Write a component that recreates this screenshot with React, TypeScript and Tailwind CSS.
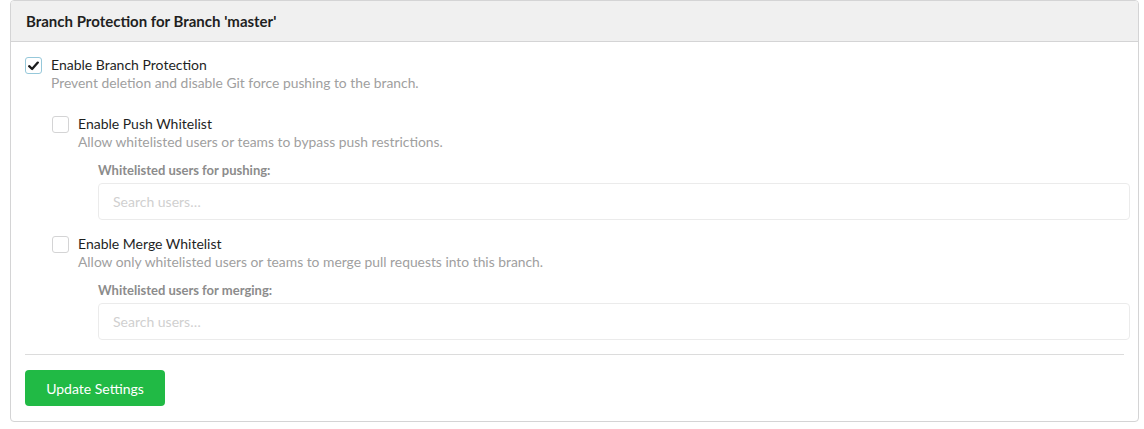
import React from "react";

function Box({ checked, focused }: { checked?: boolean; focused?: boolean }) {
  return (
    <div
      className={
        "w-[17px] h-[17px] shrink-0 rounded-[3px] border bg-white flex items-center justify-center " +
        (focused ? "border-[#96c8da]" : "border-[#d4d4d5]")
      }
    >
      {checked && (
        <svg width="11" height="10" viewBox="0 0 11 10">
          <path d="M1.2 5.2 L4.1 8 L9.8 1.6" fill="none" stroke="#1b1c1d" strokeWidth="2.3" strokeLinecap="round" strokeLinejoin="round" />
        </svg>
      )}
    </div>
  );
}

function Row({
  title,
  desc,
  checked,
  focused,
}: {
  title: string;
  desc: string;
  checked?: boolean;
  focused?: boolean;
}) {
  return (
    <div className="flex">
      <div className="pt-[1px]">
        <Box checked={checked} focused={focused} />
      </div>
      <div className="ml-[9px]">
        <div className="text-[14px] leading-[18px] text-[#1f1f1f]">{title}</div>
        <div className="text-[13.85px] leading-[18px] text-[#a0a0a0]">{desc}</div>
      </div>
    </div>
  );
}

function Field({ label }: { label: string }) {
  return (
    <div className="ml-[46px] mr-[-6px] mt-[10px]">
      <div className="text-[13px] leading-[18px] font-bold text-[#8c8c8c] mb-[4px]">{label}</div>
      <div className="h-[37px] rounded-[4px] border border-[#ebebeb] bg-white flex items-center pl-[14px] text-[14px] text-[#d0d0d0]">
        Search users…
      </div>
    </div>
  );
}

export default function App() {
  return (
    <div className="w-[1144px] h-[429px] bg-white" style={{ fontFamily: "Lato, 'Noto Sans', sans-serif" }}>
      <div className="ml-[10px] w-[1129px] h-[422px] border border-[#d4d4d5] rounded-[4px] flex flex-col overflow-hidden">
        <div className="h-[41px] shrink-0 bg-[#f0f0f0] border-b border-[#d4d4d5] flex items-center pl-[15px] pt-[1px]">
          <span className="text-[15px] font-bold text-[#1f1f1f]">Branch Protection for Branch 'master'</span>
        </div>
        <div className="px-[14px] pt-[14px]">
          <Row
            title="Enable Branch Protection"
            desc="Prevent deletion and disable Git force pushing to the branch."
            checked
            focused
          />
          <div className="ml-[27px] mt-[23px]">
            <Row title="Enable Push Whitelist" desc="Allow whitelisted users or teams to bypass push restrictions." />
            <Field label="Whitelisted users for pushing:" />
            <div className="mt-[15px]">
              <Row
                title="Enable Merge Whitelist"
                desc="Allow only whitelisted users or teams to merge pull requests into this branch."
              />
            </div>
            <Field label="Whitelisted users for merging:" />
          </div>
          <div className="mt-[14px] h-px bg-[#dcdcdc]" />
          <div className="mt-[15px]">
            <button className="h-[36px] w-[140px] rounded-[4px] bg-[#21ba45] text-white text-[14px] font-normal">
              Update Settings
            </button>
          </div>
        </div>
      </div>
    </div>
  );
}
